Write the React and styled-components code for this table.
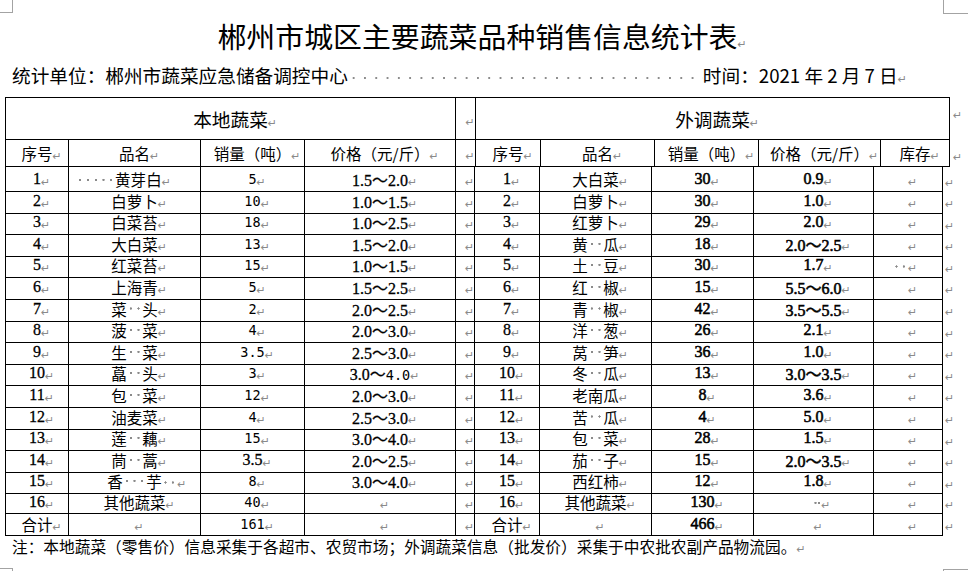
import React from 'react';
import styled, { createGlobalStyle } from 'styled-components';

const GlobalStyle = createGlobalStyle`
  html, body { margin: 0; padding: 0; background: #fff; }
  body { font-family: "Noto Sans CJK SC", sans-serif; color: #000; }
`;

const Page = styled.div`
  position: relative;
  width: 971px;
  height: 571px;
  overflow: hidden;
  box-sizing: border-box;
  padding: 15px 28px 0 12px;
  background: #fff;
`;

const Corner = styled.span`
  position: absolute;
  box-sizing: border-box;
  width: 25px;
  height: 25px;
  left: ${p => p.$left}px;
  top: ${p => p.$top}px;
  border-color: #a3a3a3;
  border-style: solid;
  border-width: ${p => (p.$t ? 1 : 0)}px ${p => (p.$r ? 1 : 0)}px ${p => (p.$b ? 1 : 0)}px ${p => (p.$l ? 1 : 0)}px;
`;

const Title = styled.div`
  height: 40px;
  line-height: 40px;
  font-size: 28.9px;
  text-align: center;
  white-space: nowrap;
`;

const Sub = styled.div`
  margin-top: 5px;
  height: 30px;
  line-height: 30px;
  font-size: 18.67px;
  white-space: nowrap;
`;

const Leader = styled.span`
  display: inline-block;
  width: 355px;
  height: 4px;
  vertical-align: middle;
  background-image: radial-gradient(circle, #8c8c8c 0.8px, transparent 1.3px);
  background-size: 11.3px 4px;
  background-repeat: repeat-x;
`;

const Table = styled.div`
  margin: 7px 0 0 -7px;
  display: flex;
  flex-direction: column;
`;

const Row = styled.div`
  display: grid;
  grid-template-columns: ${p => p.$cols};
  height: ${p => p.$h}px;
`;

const Cell = styled.div`
  box-sizing: border-box;
  border-left: 1px solid #000;
  border-bottom: 1px solid #000;
  border-top: ${p => (p.$top ? '1px solid #000' : 'none')};
  border-right: ${p => (p.$last ? '1px solid #000' : 'none')};
  display: flex;
  align-items: center;
  justify-content: center;
  font-size: ${p => (p.$big ? 18.67 : 15.5)}px;
  white-space: nowrap;
  overflow: visible;
`;

const EndCell = styled.div`
  display: flex;
  align-items: ${p => (p.$top ? 'flex-start' : 'center')};
  padding-left: ${p => p.$pad}px;
  padding-top: ${p => (p.$top ? 4 : 0)}px;
  font-size: 15.5px;
`;

const Num = styled.span`
  font-family: "Liberation Serif", "Noto Sans CJK SC", serif;
  font-size: 16px;
  font-weight: 400;
  -webkit-text-stroke: ${p => (p.$bold ? 0.55 : 0.3)}px #000;
`;

const Mono = styled.span`
  font-family: "DejaVu Sans Mono", monospace;
  font-size: 13.5px;
  -webkit-text-stroke: 0;
`;

const Dot = styled.span`
  display: inline-block;
  width: ${p => p.$w}em;
  height: 0.76em;
  vertical-align: baseline;
  background: radial-gradient(circle, #8a8a8a 0.9px, transparent 1.4px) center / 100% 100% no-repeat;
`;

const Lead = styled.span`
  display: inline-block;
  margin-left: ${p => p.$shift}em;
`;

const MarkBox = styled.span`
  display: inline-block;
  width: 0;
  white-space: nowrap;
  overflow: visible;
`;

const MarkGlyph = styled.span`
  font-family: "DejaVu Sans", sans-serif;
  font-size: 11px;
  font-weight: 400;
  color: #8a8a8a;
  -webkit-text-stroke: 0;
`;

const Note = styled.div`
  margin-top: 2px;
  line-height: 22px;
  font-size: 15.7px;
  white-space: nowrap;
`;

const dots = (n, w = 0.5) =>
  Array.from({ length: n }, (_, i) => <Dot key={i} $w={w} />);

function Mark({ trail = 0, tw = 0.5 }) {
  return (
    <MarkBox>
      {dots(trail, tw)}
      <MarkGlyph>↵</MarkGlyph>
    </MarkBox>
  );
}

const txt = s =>
  [...s].map((ch, i) =>
    ch === '·' ? <Dot key={i} $w={0.5} /> : <React.Fragment key={i}>{ch}</React.Fragment>
  );

const HEAD1 = '450px 20px 475px 20px';
const HEAD2 = '63px 132px 104px 151px 20px 65px 114px 104px 122px 70px 20px';
const BODY = '63px 132px 104px 151px 19px 65px 112px 102px 120px 70px 20px';

const local = [
  { no: '1', name: '黄芽白', lead: 5, qty: <Mono>5</Mono>, price: '1.5～2.0' },
  { no: '2', name: '白萝卜', qty: <Mono>10</Mono>, price: '1.0～1.5' },
  { no: '3', name: '白菜苔', qty: <Mono>18</Mono>, price: '1.0～2.5' },
  { no: '4', name: '大白菜', qty: <Mono>13</Mono>, price: '1.5～2.0' },
  { no: '5', name: '红菜苔', qty: <Mono>15</Mono>, price: '1.0～1.5' },
  { no: '6', name: '上海青', qty: <Mono>5</Mono>, price: '1.5～2.5' },
  { no: '7', name: '菜··头', qty: <Mono>2</Mono>, price: '2.0～2.5' },
  { no: '8', name: '菠··菜', qty: <Mono>4</Mono>, price: '2.0～3.0' },
  { no: '9', name: '生··菜', qty: <Mono>3.5</Mono>, price: '2.5～3.0' },
  { no: '10', name: '藠··头', qty: <Mono>3</Mono>, price: <>3.0～<Mono>4.0</Mono></> },
  { no: '11', name: '包··菜', qty: <Mono>12</Mono>, price: '2.0～3.0' },
  { no: '12', name: '油麦菜', qty: <Mono>4</Mono>, price: '2.5～3.0' },
  { no: '13', name: '莲··藕', qty: <Mono>15</Mono>, price: '3.0～4.0' },
  { no: '14', name: '茼··蒿', qty: <Num>3.5</Num>, price: '2.0～2.5' },
  { no: '15', name: '香···芋', trail: 2, qty: <Mono>8</Mono>, price: '3.0～4.0' },
  { no: '16', name: '其他蔬菜', qty: <Mono>40</Mono>, price: null },
  { no: '合计', cn: true, name: '', qty: <Mono>161</Mono>, price: null },
];

const remote = [
  { no: '1', name: '大白菜', qty: '30', price: '0.9' },
  { no: '2', name: '白萝卜', qty: '30', price: '1.0' },
  { no: '3', name: '红萝卜', qty: '29', price: '2.0' },
  { no: '4', name: '黄··瓜', qty: '18', price: '2.0～2.5' },
  { no: '5', name: '土··豆', qty: '30', price: '1.7', stock: 2 },
  { no: '6', name: '红··椒', qty: '15', price: '5.5～6.0' },
  { no: '7', name: '青··椒', qty: '42', price: '3.5～5.5' },
  { no: '8', name: '洋··葱', qty: '26', price: '2.1' },
  { no: '9', name: '莴··笋', qty: '36', price: '1.0' },
  { no: '10', name: '冬··瓜', qty: '13', price: '3.0～3.5' },
  { no: '11', name: '老南瓜', qty: '8', price: '3.6' },
  { no: '12', name: '苦··瓜', qty: '4', price: '5.0' },
  { no: '13', name: '包··菜', qty: '28', price: '1.5' },
  { no: '14', name: '茄··子', qty: '15', price: '2.0～3.5' },
  { no: '15', name: '西红柿', qty: '12', price: '1.8' },
  { no: '16', name: '其他蔬菜', qty: '130', price: '', priceTrail: 2 },
  { no: '合计', cn: true, name: '', qty: '466', price: '' },
];

const heads = ['序号', '品名', '销量（吨）', '价格（元/斤）'];

function BodyRow({ l, r }) {
  return (
    <Row $cols={BODY} $h={21.6}>
      <Cell>
        {l.cn ? l.no : <Num>{l.no}</Num>}
        <Mark />
      </Cell>
      <Cell>
        {l.lead ? <Lead $shift={-2}>{dots(l.lead)}</Lead> : null}
        {txt(l.name)}
        <Mark trail={l.trail || 0} />
      </Cell>
      <Cell>
        {l.qty}
        <Mark />
      </Cell>
      <Cell>
        {l.price ? <Num>{l.price}</Num> : null}
        <Mark />
      </Cell>
      <Cell>
        <Mark />
      </Cell>
      <Cell>
        {r.cn ? r.no : <Num>{r.no}</Num>}
        <Mark />
      </Cell>
      <Cell>
        {txt(r.name)}
        <Mark />
      </Cell>
      <Cell>
        <Num $bold>{r.qty}</Num>
        <Mark />
      </Cell>
      <Cell>
        {r.price ? <Num $bold>{r.price}</Num> : null}
        <Mark trail={r.priceTrail || 0} tw={0.25} />
      </Cell>
      <Cell $last>
        {r.stock ? <Lead $shift={-1}>{dots(r.stock)}</Lead> : null}
        <Mark />
      </Cell>
      <EndCell $pad={2}>
        <Mark />
      </EndCell>
    </Row>
  );
}

export default function App() {
  return (
    <Page>
      <GlobalStyle />
      <Corner $left={-12} $top={-12} $r $b />
      <Corner $left={943} $top={-11} $l $b />
      <Corner $left={-12} $top={568} $r $t />
      <Corner $left={943} $top={569} $l $t />

      <Title>
        郴州市城区主要蔬菜品种销售信息统计表
        <Mark />
      </Title>
      <Sub>
        统计单位：郴州市蔬菜应急储备调控中心
        <Leader />
        时间：2021 年 2 月 7 日
        <Mark />
      </Sub>

      <Table>
        <Row $cols={HEAD1} $h={43}>
          <Cell $top $big>
            本地蔬菜
            <Mark />
          </Cell>
          <Cell $top>
            <Mark />
          </Cell>
          <Cell $top $last $big>
            外调蔬菜
            <Mark />
          </Cell>
          <EndCell $top $pad={3}>
            <Mark />
          </EndCell>
        </Row>
        <Row $cols={HEAD2} $h={27}>
          {heads.map(h => (
            <Cell key={'l' + h}>
              {h}
              <Mark />
            </Cell>
          ))}
          <Cell>
            <Mark />
          </Cell>
          {heads.map(h => (
            <Cell key={'r' + h}>
              {h}
              <Mark />
            </Cell>
          ))}
          <Cell $last>
            库存
            <Mark />
          </Cell>
          <EndCell $pad={3}>
            <Mark />
          </EndCell>
        </Row>
        {local.map((l, i) => (
          <BodyRow key={i} l={l} r={remote[i]} />
        ))}
      </Table>

      <Note>
        注：本地蔬菜（零售价）信息采集于各超市、农贸市场；外调蔬菜信息（批发价）采集于中农批农副产品物流园。
        <Mark />
      </Note>
    </Page>
  );
}
